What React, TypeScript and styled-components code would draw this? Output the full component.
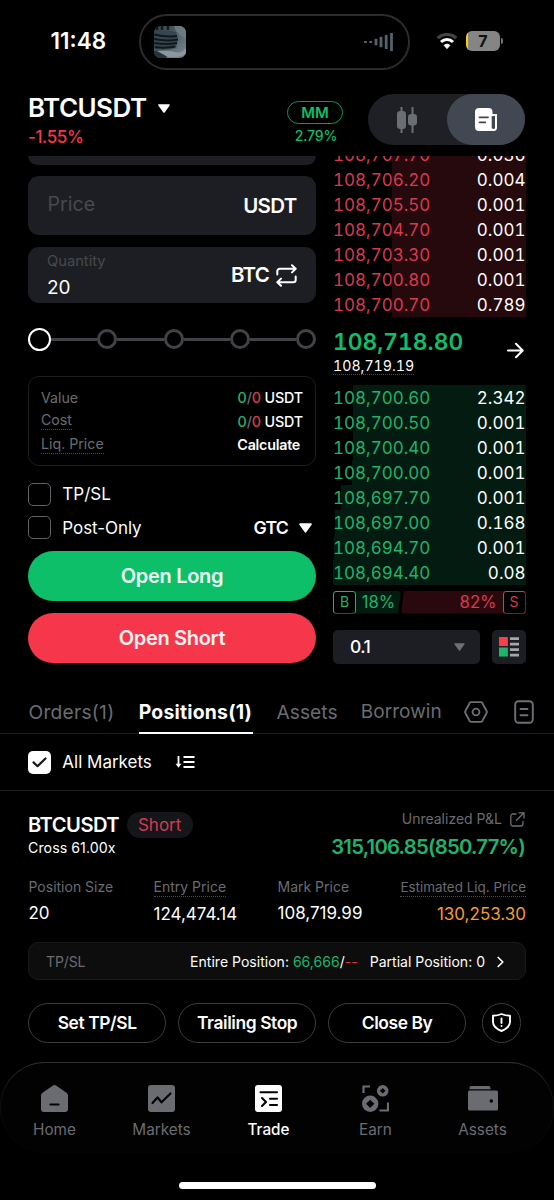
import React from 'react';
import styled, { createGlobalStyle, css } from 'styled-components';

const c = {
  green: '#0cbf68',
  red: '#f6374b',
  askText: '#d93950',
  bidText: '#1fb36d',
  panel: '#1d1e23',
  muted: '#6a6c71',
  dim: '#47494d',
  line: '#1b1c1f',
  white: '#fdfdfd',
};

const GlobalStyle = createGlobalStyle`
  * { box-sizing: border-box; }
  html, body { margin: 0; background: #000; }
  body { font-family: Inter, "Liberation Sans", sans-serif; color: ${c.white}; width: 554px; height: 1200px; overflow: hidden; }
  svg { display: block; flex: none; }
`;

const Screen = styled.div`
  width: 554px;
  height: 1200px;
  background: #000;
  display: flex;
  flex-direction: column;
  overflow: hidden;
`;

type TextProps = { $size: number; $weight?: number; $track?: number; $color?: string; $lh?: number };
const Text = styled.span<TextProps>`
  font-size: ${p => p.$size}px;
  font-weight: ${p => p.$weight ?? 400};
  letter-spacing: ${p => p.$track ?? 0}px;
  color: ${p => p.$color ?? c.white};
  line-height: ${p => p.$lh ?? 24}px;
  white-space: nowrap;
`;
const Hinted = styled(Text)<{ $top?: number }>`
  margin-top: ${p => p.$top ?? 0}px;
  border-bottom: 1px dotted #4a4c50;
`;
const Green = styled.span`
  color: ${c.bidText};
`;
const Red = styled.span`
  color: ${c.askText};
`;
const Slash = styled.span`
  color: ${c.muted};
`;

/* status bar */
const StatusBar = styled.header`
  height: 84px;
  display: flex;
  align-items: flex-start;
`;
const Clock = styled.div`
  width: 139px;
  padding: 29px 0 0 50.5px;
`;
const Island = styled.div`
  width: 271px;
  height: 56px;
  margin-top: 14px;
  padding: 0 14px 0 13px;
  border: 2px solid #2c2c2c;
  border-radius: 28px;
  display: flex;
  align-items: center;
  justify-content: space-between;
`;
const StatusIcons = styled.div`
  display: flex;
  align-items: center;
  gap: 8px;
  margin: 31px 0 0 26px;
`;
const Battery = styled.div`
  width: 34px;
  height: 20px;
  border-radius: 6px;
  background: linear-gradient(90deg, #f5cf1c 2px, #858585 2px);
  display: flex;
  align-items: center;
  justify-content: center;
`;
const BatteryTip = styled.i`
  width: 2px;
  height: 6px;
  margin-left: -7px;
  border-radius: 0 2px 2px 0;
  background: #777;
`;

/* pair header */
const PairHeader = styled.section`
  height: 72px;
  padding: 10px 28px 0;
  display: flex;
  align-items: flex-start;
`;
const PairName = styled.div`
  width: 259px;
  display: flex;
  flex-direction: column;
`;
const PairTitle = styled.div`
  display: flex;
  align-items: center;
  gap: 11.5px;
  height: 28px;
`;
const Margin = styled.div`
  width: 56px;
  padding-top: 7px;
  display: flex;
  flex-direction: column;
  align-items: center;
`;
const MarginPill = styled.div`
  width: 56px;
  height: 23px;
  border: 1px solid #0b9a56;
  border-radius: 12px;
  display: flex;
  align-items: center;
  justify-content: center;
`;
const MarginRate = styled.div`
  padding-left: 2px;
`;
const ViewToggle = styled.div`
  display: flex;
  width: 157px;
  height: 51px;
  margin-left: 25px;
  border-radius: 26px;
  background: #1f2025;
`;
const ToggleItem = styled.div<{ $on?: boolean }>`
  flex: 1;
  border-radius: 26px;
  background: ${p => (p.$on ? '#424852' : 'transparent')};
  display: flex;
  align-items: center;
  justify-content: center;
`;

/* trading area */
const TradeArea = styled.main`
  height: 529px;
  padding: 0 28px;
  display: flex;
  gap: 17px;
  flex: none;
`;
const Form = styled.div`
  width: 288px;
  flex: none;
  display: flex;
  flex-direction: column;
`;
const FieldTail = styled.div`
  height: 9px;
  margin-bottom: 11px;
  border-radius: 0 0 11px 11px;
  background: ${c.panel};
`;
const Field = styled.div<{ $h: number }>`
  height: ${p => p.$h}px;
  border-radius: 11px;
  background: ${c.panel};
  display: flex;
  align-items: center;
  justify-content: space-between;
  padding: 0 19.5px;
`;
const PriceLabel = styled(Text)`
  padding-bottom: 3px;
`;
const QtyField = styled(Field)`
  margin-top: 12px;
  padding: 0 19px;
`;
const QtyLabels = styled.div`
  display: flex;
  flex-direction: column;
  padding-bottom: 1px;
`;
const Unit = styled.div`
  display: flex;
  align-items: center;
  gap: 7px;
`;
const Slider = styled.div`
  height: 24px;
  margin-top: 24px;
  display: flex;
  align-items: center;
`;
const Stop = styled.i<{ $active?: boolean }>`
  flex: none;
  width: ${p => (p.$active ? 23 : 20)}px;
  height: ${p => (p.$active ? 23 : 20)}px;
  border: ${p => (p.$active ? '2.4px solid #fff' : '3px solid #424346')};
  border-radius: 50%;
`;
const Track = styled.i`
  flex: 1;
  height: 3px;
  background: #424346;
`;
const Summary = styled.div`
  height: 90px;
  margin-top: 25px;
  padding: 9px 12px 0;
  border: 1.5px solid #1c1d21;
  border-radius: 11px;
  display: flex;
  flex-direction: column;
`;
const SummaryRow = styled.div`
  height: 23.5px;
  display: flex;
  align-items: flex-start;
  justify-content: space-between;
`;
const Calc = styled.div`
  padding-right: 3px;
`;
const CheckRow = styled.div<{ $top: number }>`
  margin-top: ${p => p.$top}px;
  height: 23px;
  display: flex;
  align-items: center;
`;
const Box = styled.i<{ $on?: boolean }>`
  width: 23px;
  height: 23px;
  margin-right: 11.3px;
  border-radius: 5px;
  flex: none;
  display: flex;
  align-items: center;
  justify-content: center;
  ${p => (p.$on ? css`background: #fff;` : css`border: 1.5px solid #606266;`)}
`;
const TimeInForce = styled.div`
  display: flex;
  align-items: center;
  gap: 11px;
  margin-left: auto;
  padding-right: 4px;
`;
const OrderButton = styled.div<{ $bg: string; $top: number }>`
  height: 50.5px;
  margin-top: ${p => p.$top}px;
  border-radius: 26px;
  background: ${p => p.$bg};
  display: flex;
  align-items: center;
  justify-content: center;
  padding-top: 1px;
`;

/* order book */
const Book = styled.div`
  width: 192.5px;
  flex: none;
  display: flex;
  flex-direction: column;
`;
const Levels = styled.div<{ $h: number }>`
  height: ${p => p.$h}px;
  overflow: hidden;
  display: flex;
  flex-direction: column;
  justify-content: flex-end;
`;
const Level = styled.div<{ $side: 'ask' | 'bid'; $from: number }>`
  flex: none;
  height: 25px;
  display: flex;
  align-items: center;
  justify-content: space-between;
  font-variant-numeric: tabular-nums;
  background: linear-gradient(90deg, transparent ${p => p.$from}px, ${p => (p.$side === 'ask' ? '#25090c' : '#031b10')} ${p => p.$from}px);
`;
const LastPrice = styled.div`
  height: 67.5px;
  padding-top: 12px;
  display: flex;
  justify-content: space-between;
`;
const PriceStack = styled.div`
  display: flex;
  flex-direction: column;
  align-items: flex-start;
  font-variant-numeric: tabular-nums;
`;
const ArrowSlot = styled.div`
  padding: 13px 2px 0 0;
`;
const Ratio = styled.div`
  height: 23px;
  margin-top: 5.5px;
  display: flex;
`;
const RatioSide = styled.div<{ $sell?: boolean }>`
  width: ${p => (p.$sell ? 124.5 : 68)}px;
  border-radius: 4px;
  display: flex;
  align-items: center;
  justify-content: space-between;
  ${p =>
    p.$sell
      ? css`background: #2a090e; clip-path: polygon(3px 0, 100% 0, 100% 100%, 0 100%); padding-left: 58.5px;`
      : css`background: #031b10; clip-path: polygon(0 0, 100% 0, calc(100% - 3px) 100%, 0 100%); padding-right: 6px;`}
`;
const SideTag = styled.i<{ $color: string }>`
  width: 23px;
  height: 23px;
  border: 1.5px solid ${p => p.$color};
  border-radius: 3px;
  display: flex;
  align-items: center;
  justify-content: center;
  font-style: normal;
  background: #000;
`;
const BookTools = styled.div`
  margin-top: 16px;
  height: 34px;
  display: flex;
  justify-content: space-between;
`;
const Precision = styled.div`
  width: 147px;
  padding: 1px 15px 0 17px;
  border-radius: 5px;
  background: ${c.panel};
  display: flex;
  align-items: center;
  justify-content: space-between;
`;
const Layout = styled.div`
  width: 34px;
  border-radius: 5px;
  background: ${c.panel};
  display: flex;
  align-items: center;
  justify-content: center;
`;

/* tabs */
const Tabs = styled.nav`
  height: 49px;
  flex: none;
  padding: 0 20px 0 28.5px;
  border-bottom: 1.5px solid ${c.line};
  display: flex;
  align-items: flex-start;
`;
const Tab = styled.div<{ $on?: boolean; $w: number }>`
  width: ${p => p.$w}px;
  height: 49px;
  padding-top: 14.5px;
  margin-right: 23px;
  overflow: hidden;
  border-bottom: ${p => (p.$on ? '2.5px solid #fff' : '0')};
`;
const TabIcons = styled.div`
  display: flex;
  align-items: center;
  gap: 26px;
  padding-top: 15px;
`;
const FilterRow = styled.div`
  height: 57px;
  flex: none;
  padding: 0 28px;
  border-bottom: 1.5px solid ${c.line};
  display: flex;
  align-items: center;
`;
const SortSlot = styled.div`
  margin-left: 23.5px;
`;

/* position card */
const Position = styled.section`
  height: 271px;
  flex: none;
  padding: 18px 28px 0;
`;
const PositionHead = styled.div`
  height: 69px;
  padding-right: 1px;
  display: flex;
  justify-content: space-between;
`;
const HeadSide = styled.div<{ $end?: boolean }>`
  display: flex;
  flex-direction: column;
  align-items: ${p => (p.$end ? 'flex-end' : 'flex-start')};
`;
const Line = styled.div<{ $gap: number; $h: number }>`
  display: flex;
  align-items: center;
  gap: ${p => p.$gap}px;
  height: ${p => p.$h}px;
`;
const SidePill = styled.div`
  height: 26px;
  width: 66px;
  border-radius: 13px;
  background: #151619;
  display: flex;
  align-items: center;
  justify-content: center;
`;
const Stats = styled.div`
  height: 64px;
  padding-left: 0.5px;
  display: grid;
  grid-template-columns: 125px 124px 1fr auto;
`;
const Stat = styled.div<{ $end?: boolean }>`
  display: flex;
  flex-direction: column;
  align-items: ${p => (p.$end ? 'flex-end' : 'flex-start')};
`;
const TpSlBar = styled.div`
  height: 38px;
  padding: 1px 21px 0 17px;
  border: 1px solid #19191a;
  border-radius: 10px;
  background: #0d0d0d;
  display: flex;
  align-items: center;
`;
const TpSlDetail = styled.div`
  margin-left: auto;
  display: flex;
  align-items: center;
`;
const Partial = styled.div`
  padding: 0 12px;
`;
const Actions = styled.div`
  margin-top: 23px;
  display: flex;
  gap: 11.7px;
`;
const Action = styled.div`
  width: 138.3px;
  height: 39.5px;
  border: 1.3px solid #3b3c3e;
  border-radius: 20px;
  display: flex;
  align-items: center;
  justify-content: center;
  padding-top: 1px;
`;
const RoundAction = styled(Action)`
  width: 39.5px;
  margin-left: 4px;
  padding: 0;
`;

/* bottom navigation */
const NavBar = styled.nav`
  height: 91px;
  flex: none;
  border-radius: 45px;
  padding: 1.2px 1px 1px;
  background: linear-gradient(180deg, #303031 0, #121213 30%, #070707 75%, #030303 100%);
`;
const NavInner = styled.div`
  height: 100%;
  border-radius: 44px;
  background: #020202;
  padding-right: 17px;
  display: flex;
`;
const NavItem = styled.div`
  flex: 1;
  display: flex;
  flex-direction: column;
  align-items: center;
  padding-top: 19px;
`;
const IconCell = styled.div`
  height: 32px;
  display: flex;
  align-items: center;
`;
const HomeIndicator = styled.div`
  width: 197px;
  height: 7px;
  margin: 29px auto 0 178.5px;
  border-radius: 4px;
  background: #fff;
`;

const Caret = ({ w, h, fill = '#fff' }: { w: number; h: number; fill?: string }) => (
  <svg width={w} height={h} viewBox="0 0 12 9">
    <path d="M1 1h10L6 8z" fill={fill} stroke={fill} strokeWidth="1.6" strokeLinejoin="round" />
  </svg>
);

const AlbumArt = () => (
  <svg width="32" height="32" viewBox="0 0 32 32">
    <defs>
      <linearGradient id="sky" x1="0" y1="0" x2="1" y2="1">
        <stop offset="0" stopColor="#2f3f46" />
        <stop offset=".55" stopColor="#55666e" />
        <stop offset="1" stopColor="#7d8b93" />
      </linearGradient>
      <clipPath id="art"><rect width="32" height="32" rx="6.5" /></clipPath>
    </defs>
    <g clipPath="url(#art)">
      <rect width="32" height="32" fill="url(#sky)" />
      <path d="M20 0h12v13q-6-3-10-8z" fill="#6d7a82" />
      <path d="M0 5q10-2 22 1l2 7-2 9q-10 3-22 1z" fill="#37464e" />
      <path d="M0 8.500q12 3 23 1.500M0 13q12 2.500 24 .5M0 17q12 2 23 0M1 21q10 1.500 20-.5" stroke="#10181d" strokeWidth="2" fill="none" />
      <path d="M3 0v4M8 0v4M14 0v4" stroke="#141d22" strokeWidth="2.500" />
      <path d="M0 25q8-1 14 3l-2 4H0z" fill="#26333a" />
      <path d="M3 25q12-1 18 1t11-4v6q-8 4-18 3z" fill="#8b979d" />
    </g>
  </svg>
);

const Waveform = () => (
  <svg width="30" height="20" viewBox="0 0 30 20">
    {[[1.5, 1], [6.7, 1], [12, 3.2], [17, 5.2], [22.2, 7], [27.5, 9]].map(([x, r]) => (
      <path key={x} d={`M${x} ${10 - r}v${r * 2}`} stroke="#53636a" strokeWidth="2.8" />
    ))}
  </svg>
);

const Wifi = () => (
  <svg width="22" height="17" viewBox="0 0 22 17">
    <path d="M1.6 5.2a13.6 13.6 0 0 1 18.8 0" fill="none" stroke="#444" strokeWidth="3" />
    <path d="M5 9a8.7 8.7 0 0 1 12 0" fill="none" stroke="#fff" strokeWidth="3" />
    <path d="M7.9 12.3a4.6 4.6 0 0 1 6.2 0L11 15.8z" fill="#fff" stroke="#fff" strokeWidth=".6" />
  </svg>
);

const Candles = () => (
  <svg width="20" height="26" viewBox="0 0 20 26">
    <path d="M4.5 0v26M15.5 0v26" stroke="#6b6e73" strokeWidth="2" />
    <rect x="0" y="4" width="9" height="18" rx="3.2" fill="#6b6e73" />
    <rect x="11" y="7" width="9" height="11.5" rx="3.2" fill="#6b6e73" />
  </svg>
);

const NewsIcon = () => (
  <svg width="22" height="23" viewBox="0 0 22 23">
    <path d="M4 0h9.5a4 4 0 0 1 4 4v19H4a4 4 0 0 1-4-4V4a4 4 0 0 1 4-4z" fill="#fff" />
    <path d="M16.5 7H21v12.5q0 2.5-2.5 2.5H14" fill="none" stroke="#fff" strokeWidth="2" />
    <path d="M17.7 8.2v12" stroke="#424852" strokeWidth="2" />
    <path d="M4.5 9.3h8.5M4.5 14.3h5.8" stroke="#424852" strokeWidth="1.8" strokeLinecap="round" />
  </svg>
);

const Swap = () => (
  <svg width="21" height="23" viewBox="0 0 21 23" fill="none" stroke="#fff" strokeWidth="2" strokeLinecap="round" strokeLinejoin="round">
    <path d="M1.3 10.5V7.3a2.500 2.500 0 0 1 2.500-2.500h15.600M16 1.200l3.700 3.600L16 8.400" />
    <path d="M19.700 12.500v3.200a2.500 2.500 0 0 1-2.500 2.500H1.600M5 14.600l-3.700 3.600L5 21.800" />
  </svg>
);

const ArrowRight = () => (
  <svg width="17" height="17" viewBox="0 0 17 17" fill="none" stroke="#fff" strokeWidth="2" strokeLinecap="round" strokeLinejoin="round">
    <path d="M1 8.5h14.5M9 1.8l6.7 6.7L9 15.2" />
  </svg>
);

const BookIcon = () => (
  <svg width="20" height="20" viewBox="0 0 21 21">
    <rect width="9.3" height="9.5" fill="#f6404c" />
    <rect y="11" width="9.3" height="9.5" fill="#1eb46b" />
    <path d="M11.5 1.7h9.500M11.500 7.500h9.500M11.500 13.300h9.500M11.500 19.100h9.500" stroke="#a5a6a9" strokeWidth="2.800" />
  </svg>
);

const HexIcon = () => (
  <svg width="24" height="22" viewBox="0 0 24 22" fill="none" stroke="#6e7075" strokeWidth="1.8" strokeLinejoin="round">
    <path d="M7 1.2h10q.8 0 1.3.8l4.3 8q.5 1 0 2l-4.3 8q-.5.8-1.3.8H7q-.8 0-1.3-.8l-4.3-8q-.5-1 0-2l4.3-8q.5-.8 1.3-.8z" />
    <circle cx="12" cy="11" r="3.4" />
  </svg>
);

const DocIcon = () => (
  <svg width="20" height="24" viewBox="0 0 20 24" fill="none" stroke="#6e7075" strokeWidth="1.9" strokeLinecap="round">
    <rect x="1.2" y="1.2" width="17.6" height="21.6" rx="3.5" />
    <path d="M6.5 9h7M6.5 15.2h7" />
  </svg>
);

const Check = () => (
  <svg width="15" height="11" viewBox="0 0 15 11">
    <path d="M1.5 5.4l4 3.8 8-7.7" fill="none" stroke="#16171a" strokeWidth="2.2" strokeLinecap="round" strokeLinejoin="round" />
  </svg>
);

const SortIcon = () => (
  <svg width="20" height="14" viewBox="0 0 20 14">
    <path d="M3.5 1v9.5" stroke="#fff" strokeWidth="1.8" />
    <path d="M.6 8.7h5.8L3.5 12.7z" fill="#fff" />
    <path d="M8.5 2h11M8.5 7h11M8.5 12h11" stroke="#fff" strokeWidth="1.8" />
  </svg>
);

const ShareIcon = () => (
  <svg width="15" height="15" viewBox="0 0 15 15" fill="none" stroke="#6e7075" strokeWidth="1.3" strokeLinecap="round" strokeLinejoin="round">
    <path d="M6 2H3a2.2 2.2 0 0 0-2.2 2.2v7.6A2.2 2.2 0 0 0 3 14h7.8a2.2 2.2 0 0 0 2.2-2.2V9.5M8.8.8h5.2V6M14 .8 6.5 8.3" />
  </svg>
);

const Chevron = () => (
  <svg width="7" height="12" viewBox="0 0 7 12">
    <path d="M1.2 1.5 5.8 6l-4.6 4.5" fill="none" stroke="#fff" strokeWidth="1.7" strokeLinecap="round" strokeLinejoin="round" />
  </svg>
);

const Shield = () => (
  <svg width="19" height="19" viewBox="0 0 19 19" fill="none" stroke="#fff" strokeWidth="1.9" strokeLinejoin="round" strokeLinecap="round">
    <path d="M9.5 1Q13 2.600 18 2.800V9q0 5.500-8.500 9Q1 14.500 1 9V2.800Q6 2.600 9.500 1z" />
    <path d="M9.500 5.500v4.500M9.500 12.900v.2" />
  </svg>
);

const navGray = '#6a6c72';

const HomeIcon = () => (
  <svg width="27" height="27" viewBox="0 0 27 27">
    <path d="M13.5 0q.8 0 1.5.5l10.5 7.3Q27 9 27 10.5V24q0 3-3 3H3q-3 0-3-3V10.5Q0 9 1.5 7.8L12 .5q.7-.5 1.5-.5z" fill={navGray} />
    <path d="M9.5 19.5h8" stroke="#020202" strokeWidth="2.2" strokeLinecap="round" />
  </svg>
);
const MarketsIcon = () => (
  <svg width="27" height="27" viewBox="0 0 27 27">
    <rect width="27" height="27" rx="3" fill={navGray} />
    <path d="M4.5 18l5-5.5 4 4.8L22.5 8.5" fill="none" stroke="#020202" strokeWidth="2.2" strokeLinecap="round" strokeLinejoin="round" />
  </svg>
);
const TradeIcon = () => (
  <svg width="27" height="27" viewBox="0 0 27 27">
    <rect width="27" height="27" rx="3" fill="#fff" />
    <path d="M5.5 7.3h16.5M15 13.7h7M15 20h7M7 13l4 4-4 4" fill="none" stroke="#020202" strokeWidth="2.1" strokeLinecap="round" strokeLinejoin="round" />
  </svg>
);
const EarnIcon = () => (
  <svg width="27" height="27" viewBox="0 0 27 27">
    <path d="M1.5 8V1.5H8M26 17.5V25.5H17.5" fill="none" stroke={navGray} strokeWidth="2.2" />
    <circle cx="20.7" cy="5.8" r="5.8" fill={navGray} />
    <circle cx="8.2" cy="18.8" r="8.2" fill={navGray} />
    <path d="M20.7 3l2.8 2.8-2.8 2.8-2.8-2.8zM8.2 14.7l4.1 4.1-4.1 4.1-4.1-4.1z" fill="#020202" />
  </svg>
);
const WalletIcon = () => (
  <svg width="30" height="25" viewBox="0 0 30 25">
    <path d="M3 0h17.5q2 0 2 2v1.2H1.5V1.5Q1.5 0 3 0z" fill={navGray} />
    <rect y="4.5" width="30" height="20" rx="1.5" fill={navGray} />
    <circle cx="23.3" cy="15" r="1.7" fill="#020202" />
  </svg>
);

const asks = [
  ['108,707.70', '0.036'],
  ['108,706.20', '0.004'],
  ['108,705.50', '0.001'],
  ['108,704.70', '0.001'],
  ['108,703.30', '0.001'],
  ['108,700.80', '0.001'],
  ['108,700.70', '0.789'],
];
const bids: [string, string, number][] = [
  ['108,700.60', '2.342', 20.5],
  ['108,700.50', '0.001', 20.5],
  ['108,700.40', '0.001', 20],
  ['108,700.00', '0.001', 19.5],
  ['108,697.70', '0.001', 8],
  ['108,697.00', '0.168', 2.5],
  ['108,694.70', '0.001', 1],
  ['108,694.40', '0.08', 0],
];

const nav = [
  { label: 'Home', icon: <HomeIcon /> },
  { label: 'Markets', icon: <MarketsIcon /> },
  { label: 'Trade', icon: <TradeIcon />, on: true },
  { label: 'Earn', icon: <EarnIcon /> },
  { label: 'Assets', icon: <WalletIcon /> },
];

const Amount = () => (
  <Text $size={14.3} $weight={500} $track={-0.15} $lh={23}>
    <Green>0</Green><Slash>/</Slash><Red>0</Red> USDT
  </Text>
);

export default function App() {
  return (
    <Screen>
      <GlobalStyle />
      <StatusBar>
        <Clock><Text $size={22.5} $weight={600}>11:48</Text></Clock>
        <Island><AlbumArt /><Waveform /></Island>
        <StatusIcons>
          <Wifi />
          <Battery><Text $size={16} $weight={700} $color="#111" $lh={20}>7</Text></Battery>
          <BatteryTip />
        </StatusIcons>
      </StatusBar>

      <PairHeader>
        <PairName>
          <PairTitle>
            <Text $size={26} $weight={600} $track={-0.55} $lh={28}>BTCUSDT</Text>
            <Caret w={12} h={9} />
          </PairTitle>
          <Text $size={17} $weight={500} $track={-0.4} $color={c.red} $lh={31}>-1.55%</Text>
        </PairName>
        <Margin>
          <MarginPill><Text $size={15} $weight={600} $track={-0.1} $color={c.green} $lh={22}>MM</Text></MarginPill>
          <MarginRate><Text $size={14} $weight={500} $track={-0.1} $color={c.green}>2.79%</Text></MarginRate>
        </Margin>
        <ViewToggle>
          <ToggleItem><Candles /></ToggleItem>
          <ToggleItem $on><NewsIcon /></ToggleItem>
        </ViewToggle>
      </PairHeader>

      <TradeArea>
        <Form>
          <FieldTail />
          <Field $h={59}>
            <PriceLabel $size={19.6} $color={c.dim}>Price</PriceLabel>
            <Text $size={20.5} $weight={600} $track={-0.7} $lh={28}>USDT</Text>
          </Field>
          <QtyField $h={56}>
            <QtyLabels>
              <Text $size={14.7} $color={c.dim} $lh={26}>Quantity</Text>
              <Text $size={19} $lh={27}>20</Text>
            </QtyLabels>
            <Unit>
              <Text $size={20.5} $weight={600} $track={-0.8}>BTC</Text>
              <Swap />
            </Unit>
          </QtyField>
          <Slider>
            <Stop $active /><Track /><Stop /><Track /><Stop /><Track /><Stop /><Track /><Stop />
          </Slider>
          <Summary>
            <SummaryRow><Text $size={14.2} $color={c.muted} $lh={23}>Value</Text><Amount /></SummaryRow>
            <SummaryRow><Hinted $size={14.2} $color={c.muted} $lh={18} $top={1.5}>Cost</Hinted><Amount /></SummaryRow>
            <SummaryRow>
              <Hinted $size={14.2} $color={c.muted} $lh={18} $top={1.5}>Liq. Price</Hinted>
              <Calc><Text $size={14.3} $weight={600} $track={-0.25} $lh={23}>Calculate</Text></Calc>
            </SummaryRow>
          </Summary>
          <CheckRow $top={16.5}><Box /><Text $size={17}>TP/SL</Text></CheckRow>
          <CheckRow $top={10.5}>
            <Box /><Text $size={17} $track={-0.05}>Post-Only</Text>
            <TimeInForce><Text $size={17.7} $weight={600} $track={-0.8}>GTC</Text><Caret w={13} h={10} /></TimeInForce>
          </CheckRow>
          <OrderButton $bg={c.green} $top={11.5}><Text $size={20} $weight={600} $track={-0.3} $color="#effff5">Open Long</Text></OrderButton>
          <OrderButton $bg={c.red} $top={11.5}><Text $size={20} $weight={600} $track={-0.3} $color="#fff3f3">Open Short</Text></OrderButton>
        </Form>

        <Book>
          <Levels $h={161}>
            {asks.map(([p, q]) => (
              <Level key={p} $side="ask" $from={59.5}>
                <Text $size={17} $color={c.askText}>{p}</Text>
                <Text $size={17}>{q}</Text>
              </Level>
            ))}
          </Levels>
          <LastPrice>
            <PriceStack>
              <Text $size={22.8} $weight={600} $color={c.green} $lh={25}>108,718.80</Text>
              <Hinted $size={14.2} $lh={17} $top={3}>108,719.19</Hinted>
            </PriceStack>
            <ArrowSlot><ArrowRight /></ArrowSlot>
          </LastPrice>
          <Levels $h={200.5}>
            {bids.map(([p, q, from]) => (
              <Level key={p} $side="bid" $from={from}>
                <Text $size={17} $color={c.bidText}>{p}</Text>
                <Text $size={17}>{q}</Text>
              </Level>
            ))}
          </Levels>
          <Ratio>
            <RatioSide>
              <SideTag $color={c.bidText}><Text $size={14} $color={c.bidText}>B</Text></SideTag>
              <Text $size={16.6} $color={c.bidText}>18%</Text>
            </RatioSide>
            <RatioSide $sell>
              <Text $size={16.8} $color={c.askText}>82%</Text>
              <SideTag $color={c.askText}><Text $size={14} $color={c.askText}>S</Text></SideTag>
            </RatioSide>
          </Ratio>
          <BookTools>
            <Precision><Text $size={17.5} $weight={500} $track={-0.5}>0.1</Text><Caret w={11} h={8} fill="#6e7075" /></Precision>
            <Layout><BookIcon /></Layout>
          </BookTools>
        </Book>
      </TradeArea>

      <Tabs>
        <Tab $w={87.5}><Text $size={19.2} $track={0.25} $color={c.muted}>Orders(1)</Text></Tab>
        <Tab $w={115} $on><Text $size={19.4} $weight={700} $track={0.2}>Positions(1)</Text></Tab>
        <Tab $w={61.5}><Text $size={19.2} $track={0.05} $color={c.muted}>Assets</Text></Tab>
        <Tab $w={80.5}><Text $size={19} $track={0.05} $color={c.muted}>Borrowin</Text></Tab>
        <TabIcons><HexIcon /><DocIcon /></TabIcons>
      </Tabs>

      <FilterRow>
        <Box $on><Check /></Box>
        <Text $size={17}>All Markets</Text>
        <SortSlot><SortIcon /></SortSlot>
      </FilterRow>

      <Position>
        <PositionHead>
          <HeadSide>
            <Line $gap={7.5} $h={31}>
              <Text $size={20.2} $weight={600} $track={-0.55}>BTCUSDT</Text>
              <SidePill><Text $size={17} $color={c.askText}>Short</Text></SidePill>
            </Line>
            <Text $size={14.2} $weight={400} $track={0.05} $lh={15}>Cross 61.00x</Text>
          </HeadSide>
          <HeadSide $end>
            <Line $gap={8} $h={20}>
              <Text $size={14} $color={c.muted}>Unrealized P&amp;L</Text>
              <ShareIcon />
            </Line>
            <Text $size={20.3} $weight={600} $track={-0.76} $color={c.bidText} $lh={35}>315,106.85(850.77%)</Text>
          </HeadSide>
        </PositionHead>
        <Stats>
          <Stat>
            <Text $size={14} $color={c.muted} $lh={18}>Position Size</Text>
            <Text $size={17} $lh={35}>20</Text>
          </Stat>
          <Stat>
            <Hinted $size={14} $color={c.muted} $lh={18}>Entry Price</Hinted>
            <Text $size={17} $lh={35}>124,474.14</Text>
          </Stat>
          <Stat>
            <Text $size={14} $color={c.muted} $lh={18}>Mark Price</Text>
            <Text $size={17} $lh={35}>108,719.99</Text>
          </Stat>
          <Stat $end>
            <Hinted $size={13.45} $color={c.muted} $lh={18}>Estimated Liq. Price</Hinted>
            <Text $size={17} $color="#f39b35" $lh={35}>130,253.30</Text>
          </Stat>
        </Stats>
        <TpSlBar>
          <Text $size={14} $track={-0.1} $color={c.muted}>TP/SL</Text>
          <TpSlDetail>
            <Text $size={14.05}>Entire Position: <Green>66,666</Green>/<Red>--</Red></Text>
            <Partial><Text $size={14.05}>Partial Position: 0</Text></Partial>
            <Chevron />
          </TpSlDetail>
        </TpSlBar>
        <Actions>
          <Action><Text $size={17.4} $weight={600} $track={-0.4}>Set TP/SL</Text></Action>
          <Action><Text $size={17.4} $weight={600} $track={-0.4}>Trailing Stop</Text></Action>
          <Action><Text $size={17.4} $weight={600} $track={-0.4}>Close By</Text></Action>
          <RoundAction><Shield /></RoundAction>
        </Actions>
      </Position>

      <NavBar>
        <NavInner>
          {nav.map(n => (
            <NavItem key={n.label}>
              <IconCell>{n.icon}</IconCell>
              <Text $size={15.3} $weight={n.on ? 500 : 400} $color={n.on ? '#fff' : navGray} $lh={32}>{n.label}</Text>
            </NavItem>
          ))}
        </NavInner>
      </NavBar>
      <HomeIndicator />
    </Screen>
  );
}
